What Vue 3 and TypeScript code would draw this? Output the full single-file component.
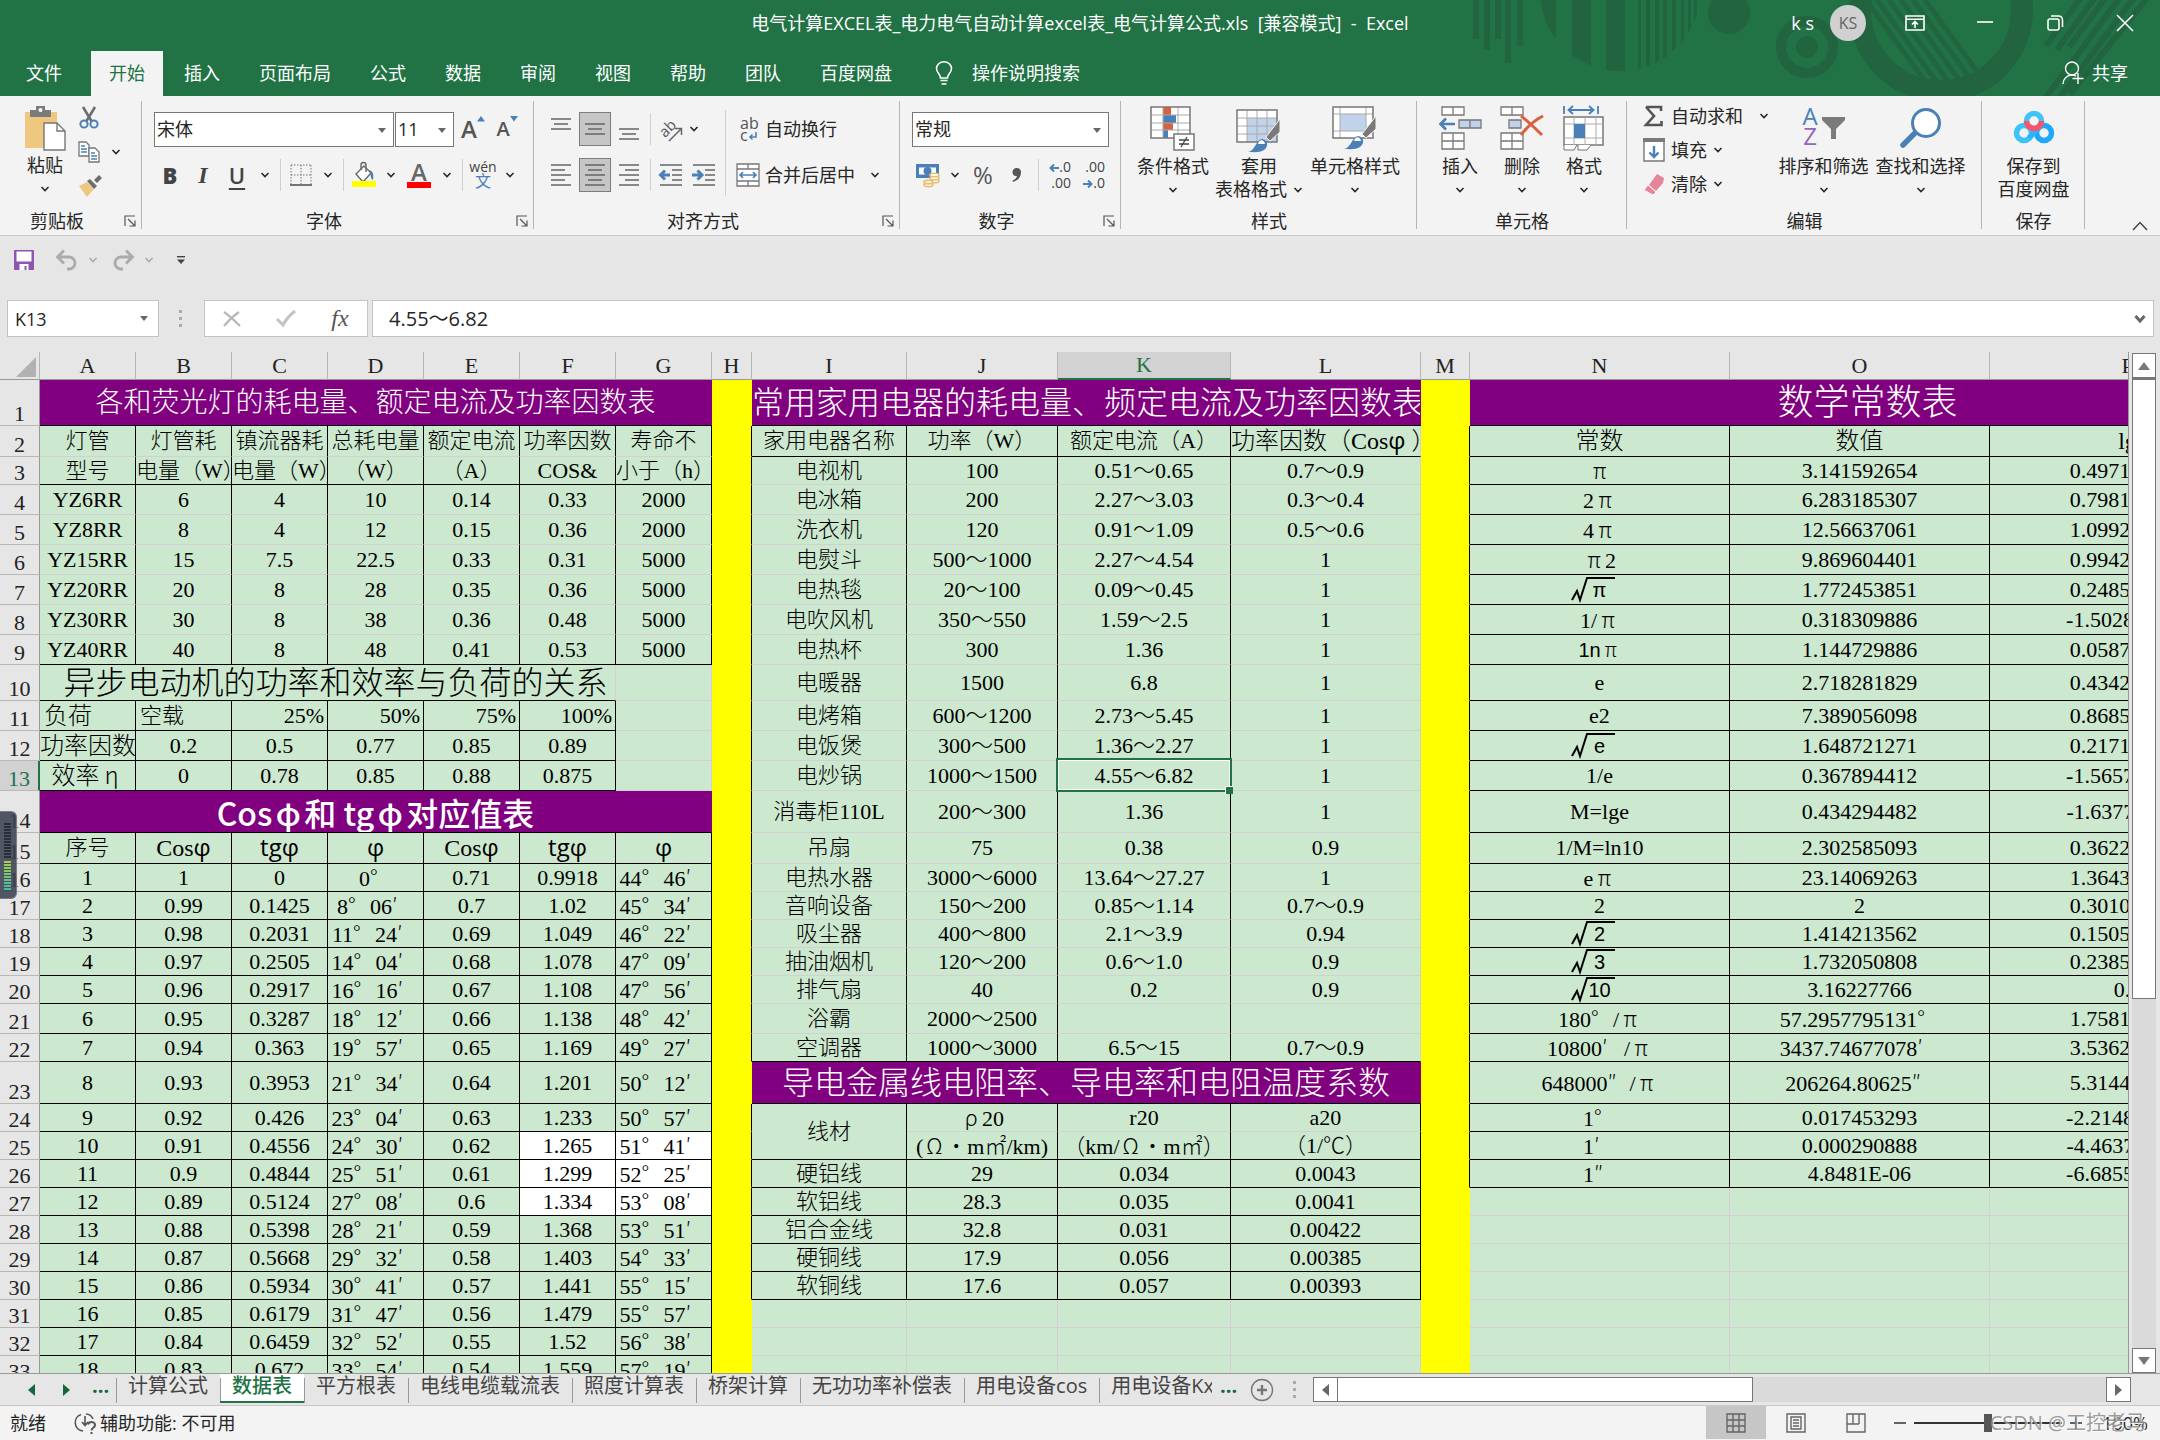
<script setup lang="ts">
import { h, ref } from 'vue'

interface Cell {
  text: string
  cls: string[]
  cols?: number
  rows?: number
  kind?: 'root' | 'phi'
}

const Chev = () =>
  h('svg', { class: 'chev-icon', width: 10, height: 6, viewBox: '0 0 10 6' }, [
    h('path', { d: 'M1.5 1l3.5 3.6L8.5 1', fill: 'none', stroke: 'currentColor', 'stroke-width': 1.5 }),
  ])
const Launcher = () =>
  h('svg', { width: 12, height: 12, viewBox: '0 0 12 12' }, [
    h('path', { d: 'M1 11V1h10M4 4l6.5 6.5M11 5.5V11H5.5', fill: 'none', stroke: '#555', 'stroke-width': 1.2 }),
  ])

const menuTabs = ['插入', '页面布局', '公式', '数据', '审阅', '视图', '帮助', '团队', '百度网盘']
const sheets = ['计算公式', '数据表', '平方根表', '电线电缆载流表', '照度计算表', '桥架计算', '无功功率补偿表', '用电设备cos', '用电设备Kx']
const activeSheet = ref('数据表')
const fontName = ref('宋体')
const fontSize = ref('11')
const numFormat = ref('常规')
const nameBox = ref('K13')
const formula = ref('4.55～6.82')
const zoomLevel = ref(50)

const columns = [
  { n: 'A', w: 96 }, { n: 'B', w: 96 }, { n: 'C', w: 96 }, { n: 'D', w: 96 }, { n: 'E', w: 96 },
  { n: 'F', w: 96 }, { n: 'G', w: 96 }, { n: 'H', w: 40 }, { n: 'I', w: 155 }, { n: 'J', w: 151 },
  { n: 'K', w: 173 }, { n: 'L', w: 190 }, { n: 'M', w: 49 }, { n: 'N', w: 260 }, { n: 'O', w: 260 },
  { n: 'P', w: 276 },
]
const tableWidth = 40 + columns.reduce((sum, c) => sum + c.w, 0)

const rowHeights = [
  46, 31, 28, 30, 30, 30, 30, 30, 30, 36, 30, 30, 30, 42, 31, 28, 28, 28, 28, 28, 30, 28, 42,
  28, 28, 28, 28, 28, 28, 28, 28, 28, 28,
]

const left: string[] = [
  '各和荧光灯的耗电量、额定电流及功率因数表',
  '灯管|灯管耗|镇流器耗|总耗电量|额定电流|功率因数|寿命不',
  '型号|电量（W）|电量（W）|（W）|（A）|COS&|小于（h）',
  'YZ6RR|6|4|10|0.14|0.33|2000',
  'YZ8RR|8|4|12|0.15|0.36|2000',
  'YZ15RR|15|7.5|22.5|0.33|0.31|5000',
  'YZ20RR|20|8|28|0.35|0.36|5000',
  'YZ30RR|30|8|38|0.36|0.48|5000',
  'YZ40RR|40|8|48|0.41|0.53|5000',
  '\u00a0\u00a0异步电动机的功率和效率与负荷的关系',
  '负荷|空载|25%|50%|75%|100%|',
  '功率因数|0.2|0.5|0.77|0.85|0.89|',
  '效率η|0|0.78|0.85|0.88|0.875|',
  'Cosφ和 tgφ对应值表',
  '序号|Cosφ|tgφ|φ|Cosφ|tgφ|φ',
  '1|1|0|0°|0.71|0.9918|44°46′',
  '2|0.99|0.1425|8°06′|0.7|1.02|45°34′',
  '3|0.98|0.2031|11°24′|0.69|1.049|46°22′',
  '4|0.97|0.2505|14°04′|0.68|1.078|47°09′',
  '5|0.96|0.2917|16°16′|0.67|1.108|47°56′',
  '6|0.95|0.3287|18°12′|0.66|1.138|48°42′',
  '7|0.94|0.363|19°57′|0.65|1.169|49°27′',
  '8|0.93|0.3953|21°34′|0.64|1.201|50°12′',
  '9|0.92|0.426|23°04′|0.63|1.233|50°57′',
  '10|0.91|0.4556|24°30′|0.62|1.265|51°41′',
  '11|0.9|0.4844|25°51′|0.61|1.299|52°25′',
  '12|0.89|0.5124|27°08′|0.6|1.334|53°08′',
  '13|0.88|0.5398|28°21′|0.59|1.368|53°51′',
  '14|0.87|0.5668|29°32′|0.58|1.403|54°33′',
  '15|0.86|0.5934|30°41′|0.57|1.441|55°15′',
  '16|0.85|0.6179|31°47′|0.56|1.479|55°57′',
  '17|0.84|0.6459|32°52′|0.55|1.52|56°38′',
  '18|0.83|0.672|33°54′|0.54|1.559|57°19′',
]

const middle: string[] = [
  '常用家用电器的耗电量、频定电流及功率因数表',
  '家用电器名称|功率（W）|额定电流（A）|功率因数（Cosφ ）',
  '电视机|100|0.51～0.65|0.7～0.9',
  '电冰箱|200|2.27～3.03|0.3～0.4',
  '洗衣机|120|0.91～1.09|0.5～0.6',
  '电熨斗|500～1000|2.27～4.54|1',
  '电热毯|20～100|0.09～0.45|1',
  '电吹风机|350～550|1.59～2.5|1',
  '电热杯|300|1.36|1',
  '电暖器|1500|6.8|1',
  '电烤箱|600～1200|2.73～5.45|1',
  '电饭煲|300～500|1.36～2.27|1',
  '电炒锅|1000～1500|4.55～6.82|1',
  '消毒柜110L|200～300|1.36|1',
  '吊扇|75|0.38|0.9',
  '电热水器|3000～6000|13.64～27.27|1',
  '音响设备|150～200|0.85～1.14|0.7～0.9',
  '吸尘器|400～800|2.1～3.9|0.94',
  '抽油烟机|120～200|0.6～1.0|0.9',
  '排气扇|40|0.2|0.9',
  '浴霸|2000～2500||',
  '空调器|1000～3000|6.5～15|0.7～0.9',
  '导电金属线电阻率、导电率和电阻温度系数',
  '线材|ρ20|r20|a20',
  '|(Ω•m㎡/km)|（km/Ω•m㎡）|（1/℃）',
  '硬铝线|29|0.034|0.0043',
  '软铝线|28.3|0.035|0.0041',
  '铝合金线|32.8|0.031|0.00422',
  '硬铜线|17.9|0.056|0.00385',
  '软铜线|17.6|0.057|0.00393',
]

const right: string[] = [
  '数学常数表',
  '常数|数值|lg',
  'π|3.141592654|0.497149873',
  '2π|6.283185307|0.798179868',
  '4π|12.56637061|1.099209864',
  'π2|9.869604401|0.994299745',
  '√π|1.772453851|0.248574936',
  '1/π|0.318309886|-1.502850127',
  '1nπ|1.144729886|0.058703021',
  'e|2.718281829|0.434294482',
  'e2|7.389056098|0.868588964',
  '√e|1.648721271|0.217147241',
  '1/e|0.367894412|-1.565705518',
  'M=lge|0.434294482|-1.637784311',
  '1/M=ln10|2.302585093|0.362215689',
  'eπ|23.14069263|1.364376354',
  '2|2|0.301029996',
  '√2|1.414213562|0.150514998',
  '√3|1.732050808|0.238560627',
  '√10|3.16227766|0.5',
  '180°/π|57.2957795131°|1.758122632',
  '10800′/π|3437.74677078′|3.536273883',
  '648000″/π|206264.80625″|5.314425133',
  '1°|0.017453293|-2.214877368',
  '1′|0.000290888|-4.463726117',
  '1″|4.8481E-06|-6.685574867',
]

function leftCells(r: number): Cell[] {
  const parts = left[r - 1].split('|')
  if (r === 1) return [{ text: parts[0], cols: 7, cls: ['title', 's28', 'kb'] }]
  if (r === 14) return [{ text: parts[0], cols: 7, cls: ['title', 's32', 'bold', 'kb'] }]
  if (r === 10) return [{ text: parts[0], cols: 6, cls: ['s32', 'kb'] }, { text: '', cls: [] }]
  return parts.map((text, c) => {
    const cls: string[] = []
    const inner = r >= 11 && r <= 13
    if (!inner || c < 6) cls.push('kr')
    if (r === 3 || r === 9 || r >= 15 || (inner && c < 6)) cls.push('kb')
    if (r === 11) cls.push(c < 2 ? 'al' : 'ar')
    if (c === 0 && inner) cls.push('s24')
    if (r === 15 && c > 0) cls.push('s24')
    if (r >= 25 && r <= 27 && c > 4) cls.push('white')
    return { text, cls, kind: r === 15 && c > 0 ? 'phi' : undefined }
  })
}

function middleCells(r: number): Cell[] {
  if (r > middle.length) return ['', '', '', ''].map((text) => ({ text, cls: [] }))
  const parts = middle[r - 1].split('|')
  if (parts.length === 1) return [{ text: parts[0], cols: 4, cls: ['title', 's32', 'kb'] }]
  const cells: Cell[] = parts.map((text, c) => {
    const cls: string[] = []
    if (c < 3 || r >= 24) cls.push('kr')
    if (r === 2 || r === 22 || r >= 25) cls.push('kb')
    if (r === 2 && c === 3) cls.push('s24')
    if (r === 13 && c === 2) cls.push('selected')
    return { text, cls, kind: r === 2 && c === 3 ? 'phi' : undefined }
  })
  if (r === 24) {
    cells[0].rows = 2
    cells[0].cls.push('kb')
  }
  return r === 25 ? cells.slice(1) : cells
}

function rightCells(r: number): Cell[] {
  if (r > right.length) return ['', '', ''].map((text) => ({ text, cls: [] }))
  const parts = right[r - 1].split('|')
  if (parts.length === 1) return [{ text: parts[0], cols: 3, cls: ['title', 's36', 'kb'] }]
  return parts.map((text, c) => {
    const cls = ['kr', 'kb']
    if (r === 2) cls.push('s24')
    if (r === 9 && c === 0) cls.push('sans')
    return text.startsWith('√') ? { text: text.slice(1), cls, kind: 'root' as const } : { text, cls }
  })
}

const rows = rowHeights.map((height, i) => {
  const r = i + 1
  const gapH: Cell = { text: '', cls: ['yellow', (r > 1 && r < 23) || (r > 23 && r < 31) ? 'kr' : ''] }
  const gapM: Cell = { text: '', cls: ['yellow', r > 1 && r < 27 ? 'kr' : ''] }
  return { r, height, cells: [...leftCells(r), gapH, ...middleCells(r), gapM, ...rightCells(r)] }
})

// Degree marks and Greek letters take a full character cell, as in a CJK font.
const runs = (text: string) => text.split(/([°′″πρηφΩ•])/).filter(Boolean)
const runClass = (s: string) => (/^[°′″]$/.test(s) ? 'cjk mark' : 'cjk')
const isWide = (s: string) => /^[°′″πρηφΩ•]$/.test(s)
</script>

<template>
  <div class="app">
    <header class="top">
      <svg class="decor" width="700" height="96" viewBox="1460 0 700 96" aria-hidden="true">
        <defs>
          <clipPath id="disc"><circle cx="1620" cy="-9" r="80" /></clipPath>
          <clipPath id="hole"><circle cx="1940" cy="14" r="71" /></clipPath>
        </defs>
        <g fill="#22643f">
          <path d="M1473 0h6v39h-6zM1484 0h6v50h-6zM1495 0h6v39h-6zM1505 0h6v63h-6zM1517 0h6v46h-6z" />
          <g clip-path="url(#disc)">
            <path d="M1540 0h16v80h-16zM1572 0h19v80h-19zM1606 0h19v80h-19zM1638 0h3v80h-3zM1646 0h4v80h-4zM1655 0h4v80h-4zM1663 0h4v80h-4zM1672 0h4v80h-4zM1681 0h3v80h-3zM1688 0h3v80h-3zM1694 0h3v80h-3z" />
          </g>
          <circle cx="1729" cy="13" r="21" />
          <circle cx="1807" cy="47" r="11" />
        </g>
        <circle cx="1807" cy="47" r="26" fill="none" stroke="#22643f" stroke-width="10" />
        <circle cx="1941" cy="10" r="81" fill="none" stroke="#22643f" stroke-width="22" />
        <g stroke="#22643f" stroke-width="5" clip-path="url(#hole)">
          <path d="M1866 0l80 110M1877 0l80 110M1889 0l80 110M1901 0l80 110M1913 0l80 110M1925 0l80 110" />
        </g>
        <g stroke="#22643f" stroke-width="6">
          <path d="M2046 46L2082 -4M2057 50L2096 -4M2069 47L2110 -8M2044 100L2124 -8M2058 100L2138 -8M2070 94L2152 -8" />
        </g>
      </svg>
      <div class="titlebar">
        <h1 class="doc-title">电气计算EXCEL表_电力电气自动计算excel表_电气计算公式.xls&nbsp; [兼容模式]&nbsp; -&nbsp; Excel</h1>
        <div class="account">
          <span>k&nbsp;s</span><button class="avatar">KS</button>
        </div>
        <div class="win-buttons">
          <button aria-label="功能区显示选项">
            <svg width="20" height="16" viewBox="0 0 20 16" fill="none" stroke="#fff" stroke-width="1.6"><path d="M1 1h18v14H1zM1 4.2h18M10 13V7M7 9.5L10 6.5l3 3" /></svg>
          </button>
          <button aria-label="最小化">
            <svg width="16" height="16" viewBox="0 0 16 16"><path d="M0 7h16" stroke="#fff" stroke-width="1.6" /></svg>
          </button>
          <button aria-label="还原">
            <svg width="16" height="16" viewBox="0 0 16 16" fill="none" stroke="#fff" stroke-width="1.6"><rect x="1" y="4" width="11" height="11" rx="2" /><path d="M4 1h7.500a4 4 0 0 1 4 4v7" /></svg>
          </button>
          <button aria-label="关闭">
            <svg width="16" height="16" viewBox="0 0 16 16"><path d="M0 0l16 16M16 0L0 16" stroke="#fff" stroke-width="1.6" /></svg>
          </button>
        </div>
      </div>
      <nav class="tabs">
        <button class="tab file">文件</button>
        <button class="tab active">开始</button>
        <button v-for="t in menuTabs" :key="t" class="tab">{{ t }}</button>
        <button class="tell-me">
          <svg width="18" height="24" viewBox="0 0 18 24" fill="none" stroke="#fff" stroke-width="1.6"><path d="M5.500 17c0-4-4-5-4-9.500a7.500 6.700 0 0 1 15 0c0 4.500-4 5.500-4 9.500zM5.500 19.500h7M6.500 23h5" /></svg>
          操作说明搜索
        </button>
        <button class="share">
          <svg width="22" height="24" viewBox="0 0 22 24" fill="none" stroke="#fff" stroke-width="1.4"><circle cx="10" cy="7.500" r="6.500" /><path d="M1 23c0-5 4-9 9-9 2 0 3 .5 4 1M16 12v11M10.500 17.500h11" /></svg>
          共享
        </button>
      </nav>
    </header>

    <section class="ribbon">
      <div class="group g-clip">
        <div class="body">
          <button class="big paste">
            <svg width="42" height="45" viewBox="0 0 42 45"><path d="M1 6h32v36H1z" fill="#eec780" /><path d="M6 4h6V0h9v4h6v7H6z" fill="#7b7b7b" /><circle cx="16.500" cy="4" r="2" fill="#fff" /><path d="M20 17h13l8 8v19H20z" fill="#fff" stroke="#777" stroke-width="1.400" /><path d="M33 17v8h8" fill="none" stroke="#777" stroke-width="1.400" /></svg>
            <span>粘贴</span><span class="second"><Chev /></span>
          </button>
          <div class="clip-col">
            <button aria-label="剪切">
              <svg width="22" height="22" viewBox="0 0 22 22"><path d="M5 0l8.500 14M17 0L8.500 14" stroke="#6d6d6d" stroke-width="2.600" /><circle cx="6" cy="17" r="3.600" fill="none" stroke="#4a80b8" stroke-width="2" /><circle cx="16" cy="17" r="3.600" fill="none" stroke="#4a80b8" stroke-width="2" /></svg>
            </button>
            <button aria-label="复制">
              <svg width="22" height="22" viewBox="0 0 22 22" fill="#fff" stroke="#777" stroke-width="1.300"><path d="M1 1h7l3 3v11H1z" /><path d="M11 7h6l4 4v10H11z" /><path d="M3 5h4M3 8h6M3 11h6M13 12h4M13 15h6M13 18h6" stroke="#4a80b8" /></svg>
              <Chev />
            </button>
            <button aria-label="格式刷">
              <svg width="24" height="22" viewBox="0 0 24 22"><path d="M1 11l8-4 7 7-7 8z" fill="#eec780" /><path d="M9 6l3-2 7 7-3 3zM16 5l5-5 3 3-5 5z" fill="#6d6d6d" /></svg>
            </button>
          </div>
        </div>
        <footer><span>剪贴板</span><button aria-label="剪贴板设置"><Launcher /></button></footer>
      </div>

      <div class="group g-font">
        <div class="body rows">
          <div class="row">
            <label class="combo font-name"><select v-model="fontName" aria-label="字体"><option>宋体</option></select></label>
            <label class="combo font-size"><select v-model="fontSize" aria-label="字号"><option>11</option></select></label>
            <button class="ib w" aria-label="增大字号"><span class="grow">A</span><svg width="8" height="6" viewBox="0 0 8 6"><path d="M0 5.500L4 0l4 5.500z" fill="#4a80b8" /></svg></button>
            <button class="ib w" aria-label="减小字号"><span class="shrink">A</span><svg width="8" height="6" viewBox="0 0 8 6"><path d="M0 0h8L4 5.500z" fill="#4a80b8" /></svg></button>
          </div>
          <div class="row">
            <button class="ib letter"><b>B</b></button>
            <button class="ib w letter italic">I</button>
            <button class="ib w letter underline">U</button>
            <button class="chev" aria-label="下划线选项"><Chev /></button>
            <i class="sep"></i>
            <button class="ib" aria-label="边框">
              <svg width="22" height="22" viewBox="0 0 22 22" fill="none" stroke="#777"><path d="M1 1h20M1 11h20M1 1v19M11 1v19M21 1v19" stroke-dasharray="1.500 1.500" /><path d="M0 21h22" stroke-width="1.600" stroke="#555" /></svg>
            </button>
            <button class="chev" aria-label="边框选项"><Chev /></button>
            <i class="sep"></i>
            <button class="ib" aria-label="填充颜色">
              <svg width="24" height="26" viewBox="0 0 24 26"><path d="M4 12l8-8 7 7-8 9z" fill="#fff" stroke="#666" stroke-width="1.400" /><path d="M9 8V3a2.500 2.500 0 0 1 5 0v7" fill="none" stroke="#666" stroke-width="1.400" /><path d="M17 8c4 1 5 4 4 10-2-1-3-4-2-7z" fill="#4a80b8" /><path d="M0 19h24v6H0z" fill="#ff0" /></svg>
            </button>
            <button class="chev" aria-label="填充选项"><Chev /></button>
            <button class="ib w fc"><span>A</span><i></i></button>
            <button class="chev" aria-label="字体颜色选项"><Chev /></button>
            <i class="sep"></i>
            <button class="ib wen"><span>wén</span><span class="blue">文</span></button>
            <button class="chev" aria-label="拼音选项"><Chev /></button>
          </div>
        </div>
        <footer><span>字体</span><button aria-label="字体设置"><Launcher /></button></footer>
      </div>

      <div class="group g-align">
        <div class="body">
          <div class="rows">
            <div class="row">
              <button class="ib w" aria-label="顶端对齐"><svg width="20" height="22" viewBox="0 0 20 22" stroke="#666" stroke-width="1.500"><path d="M0 1h20M3 6h14M0 11h20" /></svg></button>
              <button class="ib on" aria-label="垂直居中"><svg width="20" height="22" viewBox="0 0 20 22" stroke="#666" stroke-width="1.500"><path d="M0 6h20M3 11h14M0 16h20" /></svg></button>
              <button class="ib w" aria-label="底端对齐"><svg width="20" height="22" viewBox="0 0 20 22" stroke="#666" stroke-width="1.500"><path d="M0 11h20M3 16h14M0 21h20" /></svg></button>
              <i class="sep"></i>
              <button class="ib" aria-label="方向"><svg width="24" height="24" viewBox="0 0 24 24"><text x="0" y="17" transform="rotate(-45 8 12)" font-size="15" font-family="Open Sans" fill="#555">ab</text><path d="M10 24L22 12M16 11.500h6.500V18" fill="none" stroke="#666" stroke-width="1.500" /></svg></button>
              <button class="chev narrow" aria-label="方向选项"><Chev /></button>
            </div>
            <div class="row">
              <button class="ib w" aria-label="左对齐"><svg width="20" height="22" viewBox="0 0 20 22" stroke="#666" stroke-width="1.500"><path d="M0 1h20M0 6h14M0 11h20M0 16h14M0 21h20" /></svg></button>
              <button class="ib on" aria-label="居中"><svg width="20" height="22" viewBox="0 0 20 22" stroke="#666" stroke-width="1.500"><path d="M0 1h20M3 6h14M0 11h20M3 16h14M0 21h20" /></svg></button>
              <button class="ib w" aria-label="右对齐"><svg width="20" height="22" viewBox="0 0 20 22" stroke="#666" stroke-width="1.500"><path d="M0 1h20M6 6h14M0 11h20M6 16h14M0 21h20" /></svg></button>
              <i class="sep"></i>
              <button class="ib" aria-label="减少缩进"><svg width="24" height="22" viewBox="0 0 24 22"><path d="M1 1h22M13 6h10M13 11h10M13 16h10M1 21h22" stroke="#666" stroke-width="1.500" /><path d="M11 11H2M6 6.500L1.500 11 6 15.500" fill="none" stroke="#4a80b8" stroke-width="3" /></svg></button>
              <button class="ib w" aria-label="增加缩进"><svg width="24" height="22" viewBox="0 0 24 22"><path d="M1 1h22M13 6h10M13 11h10M13 16h10M1 21h22" stroke="#666" stroke-width="1.500" /><path d="M0 11h9M5.500 6.500L10 11l-4.500 4.500" fill="none" stroke="#4a80b8" stroke-width="3" /></svg></button>
            </div>
          </div>
          <i class="sep tall"></i>
          <div class="rows">
            <div class="row">
              <button class="text-btn"><span class="wrap-icon"><span>ab</span><span>c<svg width="9" height="9" viewBox="0 0 9 9"><path d="M8 0v5H2M4.500 2.500L2 5l2.500 2.500" fill="none" stroke="#4a80b8" stroke-width="1.600" /></svg></span></span>自动换行</button>
            </div>
            <div class="row">
              <button class="text-btn"><svg width="24" height="24" viewBox="0 0 24 24"><path d="M1 1h22v22H1zM1 6h22M1 18h22M12 1v5M12 18v5" fill="#fff" stroke="#777" stroke-width="1.300" /><path d="M4 12h16M7 9l-3 3 3 3M17 9l3 3-3 3" fill="none" stroke="#4a80b8" stroke-width="1.700" /></svg>合并后居中</button>
              <button class="chev wide" aria-label="合并选项"><Chev /></button>
            </div>
          </div>
        </div>
        <footer><span>对齐方式</span><button aria-label="对齐设置"><Launcher /></button></footer>
      </div>

      <div class="group g-num">
        <div class="body rows">
          <div class="row">
            <label class="combo num"><select v-model="numFormat" aria-label="数字格式"><option>常规</option></select></label>
          </div>
          <div class="row">
            <button class="ib" aria-label="会计数字格式"><svg width="24" height="24" viewBox="0 0 24 24"><path d="M0 1h23v14H0z" fill="#4a80b8" /><path d="M3 4.500h17v7H3z" fill="#fff" /><circle cx="11.500" cy="8" r="4" fill="#4a80b8" /><g fill="#fff" stroke="#e8bd74" stroke-width="1.600"><ellipse cx="18.500" cy="18" rx="4.500" ry="1.800" /><ellipse cx="18.500" cy="15" rx="4.500" ry="1.800" /><ellipse cx="18.500" cy="12" rx="4.500" ry="1.800" /><ellipse cx="12.500" cy="22" rx="4.500" ry="1.600" /><ellipse cx="12.500" cy="19" rx="4.500" ry="1.600" /></g></svg></button>
            <button class="chev" aria-label="货币选项"><Chev /></button>
            <button class="ib w pct">%</button>
            <button class="ib w" aria-label="千位分隔"><svg width="12" height="18" viewBox="0 0 12 18"><path d="M5.500 2a4 4 0 0 1 4.500 4.200C10 11 7 14.500 2 16l-.5-1.500C4 13.500 5.500 12 6 10 3 10.500 1.500 8.500 1.500 6.200A4 4 0 0 1 5.500 2z" fill="#555" /></svg></button>
            <i class="sep"></i>
            <button class="ib dec"><span><svg width="10" height="8" viewBox="0 0 10 8"><path d="M10 4H2M5 .5L1.500 4 5 7.500" fill="none" stroke="#4a80b8" stroke-width="2" /></svg>.0</span><span>.00</span></button>
            <button class="ib w dec"><span>.00</span><span><svg width="10" height="8" viewBox="0 0 10 8"><path d="M0 4h8M5 .5L8.500 4 5 7.500" fill="none" stroke="#4a80b8" stroke-width="2" /></svg>.0</span></button>
          </div>
        </div>
        <footer><span>数字</span><button aria-label="数字设置"><Launcher /></button></footer>
      </div>

      <div class="group g-style">
        <div class="body">
          <button class="big b80">
            <svg width="46" height="46" viewBox="0 0 46 46"><path d="M1 1h39v31H1z" fill="#fff" /><path d="M13 1h8v8h-8zM13 17h10v7H13z" fill="#d9603f" /><path d="M13 9h13v8H13zM13 24h5v8h-5z" fill="#4a80b8" /><path d="M1 9h39M1 17h39M1 24h39M13 1v31M28 1v31" stroke="#aaa" /><path d="M1 1h39v31H1z" fill="none" stroke="#777" stroke-width="1.500" /><path d="M24 28h20v16H24z" fill="#fff" stroke="#777" stroke-width="1.500" /><path d="M29 34h10M29 38h10M37 31l-6 10" stroke="#444" stroke-width="1.300" /></svg>
            <span>条件格式</span><span class="second"><Chev /></span>
          </button>
          <button class="big b92">
            <svg width="46" height="46" viewBox="0 0 46 46"><path d="M1 4h40v32H1z" fill="#fff" /><path d="M11 12h30v24H11z" fill="#c0d3ea" /><path d="M1 12h40M1 20h40M1 28h40M11 4v32M21 4v32M31 4v32" stroke="#aaa" /><path d="M1 4h40v32H1z" fill="none" stroke="#777" stroke-width="1.500" /><path d="M44 13v13l-10 9-4-4z" fill="#7a7a7a" stroke="#f3f3f3" /><path d="M12 46c7-1 8-12 14-13 6 1 7 7 2 11-4 3-11 2-16 2z" fill="#4a80b8" /><path d="M22 38c1-5 6-5 7 0" fill="#fff" /></svg>
            <span>套用</span><span class="second">表格格式 <Chev /></span>
          </button>
          <button class="big b92 gap">
            <svg width="46" height="46" viewBox="0 0 46 46"><path d="M1 1h40v31H1z" fill="#fff" /><path d="M8 8h26v17H8z" fill="#c0d3ea" /><path d="M1 8h40M1 25h40M8 1v31M34 1v31" stroke="#aaa" /><path d="M1 1h40v31H1z" fill="none" stroke="#777" stroke-width="1.500" /><path d="M44 10v13l-10 9-4-4z" fill="#7a7a7a" stroke="#f3f3f3" /><path d="M12 43c7-1 8-12 14-13 6 1 7 7 2 11-4 3-11 2-16 2z" fill="#4a80b8" /><path d="M22 35c1-5 6-5 7 0" fill="#fff" /></svg>
            <span>单元格样式</span><span class="second"><Chev /></span>
          </button>
        </div>
        <footer><span>样式</span></footer>
      </div>

      <div class="group g-cells">
        <div class="body">
          <button class="big b62">
            <svg width="44" height="46" viewBox="0 0 44 46"><path d="M4 1h22v8H4zM15 1v8M4 27h22v16H4zM15 27v16M4 35h22" fill="#fff" stroke="#777" stroke-width="1.300" /><path d="M21 14h22v8H21zM32 14v8" fill="#c0d3ea" stroke="#777" stroke-width="1.300" /><path d="M17 18H3M8 12.500L2.500 18 8 23.500" fill="none" stroke="#4a80b8" stroke-width="2.600" /></svg>
            <span>插入</span><span class="second"><Chev /></span>
          </button>
          <button class="big b62">
            <svg width="44" height="46" viewBox="0 0 44 46"><path d="M1 1h22v8H1zM12 1v8M1 27h22v16H1zM12 27v16M1 35h22" fill="#fff" stroke="#777" stroke-width="1.300" /><path d="M9 14h12v8H9z" fill="#c0d3ea" stroke="#777" stroke-width="1.300" /><path d="M21 10c7 5 14 12 21 19M43 10c-8 4-16 11-22 19" fill="none" stroke="#d9603f" stroke-width="3" /></svg>
            <span>删除</span><span class="second"><Chev /></span>
          </button>
          <button class="big b62">
            <svg width="42" height="46" viewBox="0 0 42 46"><path d="M1 0v8M35 0v8M6 4h24M10 0L5.500 4l4.500 4M26 0l4.500 4L26 8" fill="none" stroke="#4a80b8" stroke-width="1.800" /><path d="M1 11h39v28H1z" fill="#fff" stroke="#777" stroke-width="1.500" /><path d="M1 18h39M1 32h39M11 11v28M22 11v28M33 11v28" stroke="#aaa" /><path d="M11 18h11v14H11z" fill="#4a80b8" /><path d="M1 39v5h10l3-5M15 39v5h9l4-5" fill="#fff" stroke="#777" /></svg>
            <span>格式</span><span class="second"><Chev /></span>
          </button>
        </div>
        <footer><span>单元格</span></footer>
      </div>

      <div class="group g-edit">
        <div class="body">
          <div class="edit-col">
            <button><svg width="22" height="24" viewBox="0 0 22 24"><path d="M3 3h15v4M3 3l8 9-8 9h15.500v-4" fill="none" stroke="#555" stroke-width="2.600" /></svg>自动求和<Chev class="far" /></button>
            <button><svg width="22" height="24" viewBox="0 0 22 24"><path d="M1 1h20v22H1z" fill="#fff" stroke="#777" stroke-width="1.400" /><path d="M0 0h22v4H0z" fill="#7a7a7a" /><path d="M11 8v11M6.500 14.500L11 19l4.500-4.500" fill="none" stroke="#4a80b8" stroke-width="2.400" /></svg>填充<Chev /></button>
            <button><svg width="22" height="24" viewBox="0 0 22 24"><path d="M14 2l7 4-1 5-7 8-7-6z" fill="#e7849a" /><path d="M5 13l8 7-3 3-9-5z" fill="#e7849a" stroke="#f3f3f3" stroke-width="1" /></svg>清除<Chev /></button>
          </div>
          <button class="big b97">
            <span class="sort-icon"><span class="az"><span>A</span><span class="z">Z</span></span><svg width="23" height="23" viewBox="0 0 23 23"><path d="M0 0h23v3l-9 9v10H9V12L0 3z" fill="#7a7a7a" /></svg></span>
            <span>排序和筛选</span><span class="second"><Chev /></span>
          </button>
          <button class="big b97">
            <svg width="44" height="46" viewBox="0 0 44 46"><path d="M4 39l14-14" stroke="#4a80b8" stroke-width="5.500" stroke-linecap="round" /><circle cx="27" cy="17" r="13.500" fill="#fff" stroke="#4a80b8" stroke-width="3" /></svg>
            <span>查找和选择</span><span class="second"><Chev /></span>
          </button>
        </div>
        <footer><span>编辑</span></footer>
      </div>

      <div class="group g-save">
        <div class="body">
          <button class="big b97">
            <svg width="42" height="46" viewBox="0 0 42 46" fill="none" stroke-width="5.500"><circle cx="11" cy="27" r="7.500" stroke="#3cc3f7" /><circle cx="31" cy="27" r="7.500" stroke="#1ea7fb" /><path d="M16 32l9-10" stroke="#2bb5fa" /><circle cx="21" cy="15" r="7.500" stroke="#3fc4f8" /><path d="M13.500 15a7.500 7.500 0 0 0 15 0" stroke="#f9536d" /></svg>
            <span>保存到</span><span class="second">百度网盘</span>
          </button>
        </div>
        <footer><span>保存</span></footer>
      </div>
      <button class="collapse" aria-label="折叠功能区"><svg width="16" height="10" viewBox="0 0 16 10"><path d="M1 9l7-7.500L15 9" fill="none" stroke="#444" stroke-width="1.500" /></svg></button>
    </section>

    <div class="qat">
      <button aria-label="保存"><svg width="20" height="20" viewBox="0 0 20 20"><path d="M0 0h20v20H0z" fill="#8a55b3" /><path d="M2.500 1.500h15v10h-15zM5.500 14h9v6h-2v-4h-2v4h-5z" fill="#fff" /></svg></button>
      <button aria-label="撤消"><svg width="24" height="20" viewBox="0 0 24 20"><path d="M2 7h12a6 6 0 0 1 0 12h-2M9 .5L2.500 7 9 13.500" fill="none" stroke="#ababab" stroke-width="2.800" /></svg></button>
      <button class="dim" aria-label="撤消选项"><Chev /></button>
      <button aria-label="恢复"><svg width="24" height="20" viewBox="0 0 24 20"><path d="M22 7H10a6 6 0 0 0 0 12h2M15 .5L21.500 7 15 13.500" fill="none" stroke="#ababab" stroke-width="2.800" /></svg></button>
      <button class="dim" aria-label="恢复选项"><Chev /></button>
      <button class="custom" aria-label="自定义"><svg width="8" height="8" viewBox="0 0 8 8"><path d="M0 .7h8" stroke="#444" stroke-width="1.400" /><path d="M0 3.500h8L4 8z" fill="#444" /></svg></button>
    </div>

    <div class="formula-bar">
      <label class="combo name-box"><input v-model="nameBox" aria-label="名称框" /></label>
      <i class="dots"></i>
      <div class="fx">
        <button aria-label="取消"><svg width="18" height="16" viewBox="0 0 18 16"><path d="M1 1c6 4 11 9 16 14M16 1C10 5 5 10 1 15" fill="none" stroke="#b9b9b9" stroke-width="2.200" /></svg></button>
        <button aria-label="输入"><svg width="20" height="17" viewBox="0 0 20 17"><path d="M1 9l6 6C10 9 14 5 19 1" fill="none" stroke="#c3c3c3" stroke-width="3" /></svg></button>
        <button class="fn"><em>fx</em></button>
      </div>
      <label class="formula"><input v-model="formula" aria-label="编辑栏" />
        <svg width="12" height="8" viewBox="0 0 12 8"><path d="M1.500 1L6 6l4.500-5" fill="none" stroke="#666" stroke-width="3" /></svg>
      </label>
    </div>

    <main class="sheet">
      <div class="viewport">
        <table :style="{ width: tableWidth + 'px' }">
          <colgroup><col :style="{ width: '40px' }" /><col v-for="c in columns" :key="c.n" :style="{ width: c.w + 'px' }" /></colgroup>
          <thead>
            <tr>
              <th class="corner"><svg width="20" height="20" viewBox="0 0 20 20"><path d="M20 0v20H0z" fill="#b2b2b2" /></svg></th>
              <th v-for="c in columns" :key="c.n" scope="col" :class="{ cur: c.n === 'K' }">{{ c.n }}</th>
            </tr>
          </thead>
          <tbody>
            <tr v-for="row in rows" :key="row.r" :style="{ height: row.height + 'px' }">
              <th scope="row" :class="{ cur: row.r === 13 }">{{ row.r }}</th>
              <td v-for="(cell, i) in row.cells" :key="i" :class="cell.cls" :colspan="cell.cols" :rowspan="cell.rows">
                <span v-if="cell.kind === 'root'" class="root"><svg width="44" height="26" viewBox="0 0 44 26"><path d="M1 24l5-9 3 9L16 2h28" fill="none" stroke="#000" stroke-width="2" /></svg>{{ cell.text }}</span>
                <template v-else-if="cell.kind === 'phi'"><template v-for="(s, k) in cell.text.split(/(tgφ|φ)/)" :key="k"><span v-if="s.endsWith('φ')" class="phi">{{ s }}</span><template v-else>{{ s }}</template></template></template>
                <template v-else><template v-for="(s, k) in runs(cell.text)" :key="k"><span v-if="isWide(s)" :class="runClass(s)">{{ s }}</span><template v-else>{{ s }}</template></template></template>
              </td>
            </tr>
          </tbody>
        </table>
      </div>
      <div class="vscroll">
        <button aria-label="向上"><svg width="12" height="8" viewBox="0 0 12 8"><path d="M0 8l6-8 6 8z" fill="#777" /></svg></button>
        <div class="track"><div class="thumb"></div></div>
        <button aria-label="向下"><svg width="12" height="8" viewBox="0 0 12 8"><path d="M0 0h12L6 8z" fill="#777" /></svg></button>
      </div>
      <div class="meter" aria-hidden="true"><i></i><i class="lit"></i></div>
    </main>

    <div class="sheet-tabs">
      <button class="nav" aria-label="上一张"><svg width="7" height="12" viewBox="0 0 7 12"><path d="M7 0v12L0 6z" fill="#14673c" /></svg></button>
      <button class="nav" aria-label="下一张"><svg width="7" height="12" viewBox="0 0 7 12"><path d="M0 0v12l7-6z" fill="#14673c" /></svg></button>
      <button class="more">...</button>
      <div class="tab-list">
        <button v-for="s in sheets" :key="s" :class="{ active: s === activeSheet }" @click="activeSheet = s">{{ s }}</button>
      </div>
      <button class="more">...</button>
      <button class="add" aria-label="新工作表"><svg width="24" height="24" viewBox="0 0 24 24" fill="none" stroke="#777" stroke-width="1.400"><circle cx="12" cy="12" r="10.500" /><path d="M12 7v10M7 12h10" stroke-width="2.400" /></svg></button>
      <i class="dots"></i>
      <div class="hscroll">
        <button aria-label="向左"><svg width="7" height="12" viewBox="0 0 7 12"><path d="M7 0v12L0 6z" fill="#666" /></svg></button>
        <div class="track"><div class="thumb"></div></div>
        <button aria-label="向右"><svg width="7" height="12" viewBox="0 0 7 12"><path d="M0 0v12l7-6z" fill="#666" /></svg></button>
      </div>
    </div>

    <footer class="status">
      <span class="ready">就绪</span>
      <svg width="22" height="22" viewBox="0 0 22 22" fill="none" stroke="#555" stroke-width="1.600"><path d="M6 2.500a8.500 8.500 0 0 0 2 16.500M11 2a8 8 0 0 1 7 5" /><path d="M10 4v9M7 10l3 3.500 3-3.500" /><path d="M13 12.500c1-3.500 7-3 7 .5 0 3-3.500 2.500-3.500 5.500M16.500 20v2" stroke-width="2" /></svg>
      <span>辅助功能: 不可用</span>
      <div class="views">
        <button class="on" aria-label="普通"><svg width="20" height="20" viewBox="0 0 20 20" fill="none" stroke="#666" stroke-width="1.400"><path d="M1 1h18v18H1zM1 7h18M1 13h18M7 1v18M13 1v18" /></svg></button>
        <button aria-label="页面布局"><svg width="20" height="20" viewBox="0 0 20 20" fill="none" stroke="#666" stroke-width="1.400"><path d="M1 1h18v18H1zM5 4h10v12H5zM7 7h6M7 10h6M7 13h6" /></svg></button>
        <button aria-label="分页预览"><svg width="20" height="20" viewBox="0 0 20 20" fill="none" stroke="#666" stroke-width="1.400"><path d="M1 1h18v18H1zM7 1v10M13 1v10M1 11h12" /></svg></button>
      </div>
      <button class="zoom-step" aria-label="缩小"><svg width="12" height="12" viewBox="0 0 12 12"><path d="M0 6h12" stroke="#333" stroke-width="1.500" /></svg></button>
      <input v-model="zoomLevel" class="zoom" type="range" min="0" max="100" aria-label="显示比例" />
      <button class="zoom-step" aria-label="放大"><svg width="12" height="12" viewBox="0 0 12 12"><path d="M0 6h12M6 0v12" stroke="#333" stroke-width="1.500" /></svg></button>
      <span class="percent">100%</span>
      <span class="watermark">CSDN @工控老马</span>
    </footer>
  </div>
</template>

<style>
body { margin: 0; overflow: hidden; }
</style>

<style scoped>
.app {
  height: 100vh;
  display: flex;
  flex-direction: column;
  background: #e6e6e6;
  color: #262626;
  font: 18px/24px "Open Sans", "Noto Sans CJK SC", sans-serif;
}
* { box-sizing: border-box; }
button {
  padding: 0;
  border: 0;
  background: none;
  color: inherit;
  font: inherit;
  white-space: nowrap;
}
svg { flex: none; overflow: visible; }
select, input { font: inherit; color: inherit; }

.top { position: relative; flex: none; height: 96px; background: #217346; color: #fff; }
.decor { position: absolute; right: 0; top: 0; overflow: hidden; }
.titlebar { position: relative; display: flex; align-items: center; height: 46px; }
.doc-title { position: absolute; left: 0; right: 0; margin: 0; text-align: center; font-size: 18px; line-height: 24px; font-weight: 400; }
.account { display: flex; align-items: center; gap: 16px; margin-left: auto; }
.avatar { width: 36px; height: 36px; border-radius: 50%; background: #d0d0d0; color: #666; font-size: 16px; }
.win-buttons { display: flex; margin-left: 14px; }
.win-buttons button { display: flex; align-items: center; justify-content: center; width: 70px; height: 46px; }
.tabs { position: relative; display: flex; height: 45px; margin-top: 5px; padding-left: 8px; gap: 3px; }
.tab { padding: 0 18px 2px; }
.tab.file { margin-right: 8px; }
.tab.active { background: #f3f3f3; color: #217346; }
.tell-me { display: flex; align-items: center; gap: 19px; margin-left: 22px; padding-bottom: 2px; }
.share { display: flex; align-items: center; gap: 8px; margin-left: auto; margin-right: 32px; padding-bottom: 2px; }

.ribbon { position: relative; display: flex; flex: none; height: 140px; background: #f3f3f3; border-bottom: 1px solid #c8c8c8; }
.group { position: relative; display: flex; flex-direction: column; flex: none; }
.group::after { content: ""; position: absolute; right: 0; top: 5px; bottom: 6px; width: 1px; background: #b5b5b5; }
.g-clip { width: 142px; }
.g-font { width: 392px; }
.g-align { width: 366px; }
.g-num { width: 221px; }
.g-style { width: 296px; }
.g-cells { width: 210px; }
.g-edit { width: 355px; }
.g-save { width: 103px; }
.body { display: flex; height: 112px; }
.group footer { display: flex; align-items: center; height: 26px; }
.group footer span { flex: 1; text-align: center; }
.group footer button { display: flex; width: 28px; padding-left: 10px; }
.g-clip .body { padding-left: 20px; }
.g-font .body, .g-num .body, .g-cells .body { padding-left: 12px; }
.g-align .body { padding-left: 10px; }
.g-style .body { padding-left: 12px; }
.g-edit .body { padding-left: 16px; }
.g-save .body { padding-left: 3px; }
.rows { display: flex; flex-direction: column; gap: 10px; padding-top: 15px; }
.row { display: flex; align-items: center; height: 36px; }
.ib { display: flex; align-items: center; justify-content: center; flex: none; width: 32px; height: 34px; }
.ib.w { width: 34px; }
.ib.on { background: #c6c6c6; border: 1px solid #7d7d7d; margin: 0 1px; }
.chev { display: flex; align-items: center; justify-content: center; width: 22px; height: 34px; }
.chev.narrow { width: 14px; }
.chev.wide { width: 40px; }
.sep { flex: none; width: 1px; height: 32px; margin: 0 4px; background: #d0d0d0; }
.sep.tall { height: 86px; margin: 14px 10px 0 4px; }
.combo { position: relative; display: flex; height: 35px; background: #fff; border: 1px solid #777; }
.combo::after {
  content: ""; position: absolute; right: 7px; top: 15px;
  border: 4px solid transparent; border-top: 5px solid #666; border-bottom: 0;
}
.combo select, .combo input { width: 100%; padding: 0 2px; border: 0; background: none; appearance: none; outline: none; }
.font-name { width: 240px; margin-right: 1px; }
.font-size { width: 59px; margin-right: 2px; }
.num { width: 197px; }
.grow, .shrink { color: #555; font-weight: 600; font-size: 24px; }
.shrink { font-size: 20px; }
.ib > .grow + svg, .ib > .shrink + svg { align-self: flex-start; margin-top: 4px; }
.letter { font-size: 22px; color: #444; font-weight: 600; }
.italic { font-family: "Liberation Serif", serif; font-style: italic; font-size: 24px; }
.underline { text-decoration: underline; text-underline-offset: 4px; }
.fc { flex-direction: column; font-size: 24px; line-height: 20px; color: #666; font-weight: 600; }
.fc i { width: 24px; height: 6px; background: #f00; }
.wen { flex-direction: column; font-size: 14px; line-height: 12px; color: #444; }
.wen .blue { color: #4a80b8; font-size: 16px; line-height: 16px; }
.text-btn { display: flex; align-items: center; gap: 5px; }
.wrap-icon { display: flex; flex-direction: column; width: 24px; padding-left: 4px; font-size: 16px; line-height: 12px; color: #555; text-align: left; }
.pct { font-size: 24px; color: #555; }
.dec { flex-direction: column; align-items: flex-end; font-size: 14px; line-height: 16px; color: #444; padding-right: 4px; }
.big { display: flex; flex-direction: column; align-items: center; padding-top: 10px; line-height: 23px; }
.big > svg { margin-bottom: 3px; }
.second { display: flex; align-items: center; gap: 6px; height: 23px; }
.sort-icon { display: flex; gap: 4px; height: 46px; margin-bottom: 3px; font-size: 24px; color: #4a80b8; }
.sort-icon svg { margin-top: 11px; }
.az { display: flex; flex-direction: column; line-height: 20px; }
.az .z { color: #9563bd; }
.paste { width: 50px; }
.b62 { width: 62px; }
.b80 { width: 80px; }
.b92 { width: 92px; }
.b92.gap { margin-left: 4px; }
.b97 { width: 97px; }
.clip-col { display: flex; flex-direction: column; padding: 5px 0 0 8px; }
.clip-col button { display: flex; align-items: center; gap: 11px; height: 34px; }
.edit-col { display: flex; flex-direction: column; width: 132px; padding-top: 3px; }
.edit-col button { display: flex; align-items: center; gap: 6px; height: 34px; }
.far { margin-left: 10px; }
.collapse { position: absolute; right: 12px; bottom: 4px; display: flex; }

.qat { display: flex; align-items: center; flex: none; height: 48px; padding-left: 14px; }
.qat button { display: flex; margin-right: 21px; }
.qat .dim { color: #aaa; margin: 0 13px 0 -12px; }
.qat .custom { margin-left: 10px; }

.formula-bar { display: flex; flex: none; height: 37px; margin: 16px 6px 15px 7px; }
.formula-bar .combo { width: 152px; height: 37px; border-color: #c3c3c3; }
.formula-bar .combo input { padding: 0 7px; }
.formula-bar .combo::after { right: 10px; }
.dots { width: 3px; height: 17px; background: repeating-linear-gradient(#aaa 0 3px, transparent 3px 7px); }
.formula-bar .dots { margin: 10px 22px 0 20px; }
.fx { display: flex; width: 164px; background: #fff; border: 1px solid #c3c3c3; }
.fx button { display: flex; flex: 1; align-items: center; justify-content: center; }
.fx .fn { font: 24px "Liberation Serif", serif; color: #555; }
.formula { display: flex; flex: 1; align-items: center; margin-left: 4px; padding: 0 7px 0 14px; background: #fff; border: 1px solid #c3c3c3; font-size: 20px; }
.formula input { flex: 1; border: 0; outline: none; background: none; }

.sheet { position: relative; display: flex; flex: 1; min-height: 0; }
.viewport { flex: 1; min-width: 0; overflow: hidden; border-right: 1px solid #999; background: #cce8cf; }
table {
  table-layout: fixed;
  border-collapse: separate;
  border-spacing: 0;
  color: #000;
  font: 300 22px/22px "Liberation Serif", "Noto Sans CJK SC", serif;
}
th { padding: 0; font-weight: 400; background: #e6e6e6; color: #222; }
thead th { height: 28px; border-right: 1px solid #b5b5b5; border-bottom: 1px solid #999; }
thead th.cur { background: #d2d2d2; color: #217346; border-bottom: 2px solid #217346; }
.corner svg { display: block; margin: 3px 3px 0 auto; }
tbody th { vertical-align: bottom; border-right: 1px solid #999; border-bottom: 1px solid #b8b8b8; }
tbody th.cur { background: #d2d2d2; color: #217346; border-right: 2px solid #217346; }
td {
  padding: 0;
  overflow: hidden;
  white-space: nowrap;
  text-align: center;
  background: #cce8cf;
  border-right: 1px solid #d3d0d5;
  border-bottom: 1px solid #d3d0d5;
}
.yellow { background: #ff0; border-color: #ff0; }
.white { background: #fff; }
.title { background: #800080; color: #fff; border-right-color: #800080; }
.kr { border-right-color: #000; }
.kb { border-bottom-color: #000; }
.al { text-align: left; padding-left: 4px; }
.ar { text-align: right; padding-right: 3px; }
.s24 { font-size: 24px; }
.s28 { font-size: 28px; line-height: 30px; }
.s32 { font-size: 32px; line-height: 32px; }
.s36 { font-size: 36px; line-height: 36px; }
.bold { font-weight: 500; font-family: "Noto Sans CJK SC", sans-serif; }
.cjk { display: inline-block; width: 1em; line-height: 20px; font-family: "Noto Sans CJK SC", sans-serif; }
.mark { text-align: left; }
.phi { font-family: "Open Sans", sans-serif; font-weight: 500; line-height: 20px; }
.sans { font-family: "Liberation Sans", sans-serif; font-size: 20px; }
.root { position: relative; display: inline-block; font: 20px/22px "Liberation Sans", sans-serif; }
.root svg { position: absolute; left: calc(50% - 29px); top: -3px; }
.selected { position: relative; overflow: visible; }
.selected::before { content: ""; position: absolute; inset: -3px -2px -2px; border: 2px solid #217346; outline: 1px solid #fff; outline-offset: -3px; }
.selected::after { content: ""; position: absolute; right: -3px; bottom: -4px; width: 7px; height: 7px; background: #217346; border: solid #fff; border-width: 1px 0 0 1px; }
.vscroll { display: flex; flex-direction: column; width: 24px; margin: 1px 4px 0 3px; }
.vscroll button { display: flex; align-items: center; justify-content: center; height: 25px; background: #fff; border: 1px solid #777; }
.vscroll .track { flex: 1; background: #dadada; }
.vscroll .thumb { height: 64%; background: #fff; border: 1px solid #777; border-top-width: 2px; }
.meter {
  position: absolute; left: 0; top: 459px; width: 17px; height: 88px; padding: 11px 5px 0 4px;
  display: flex; flex-direction: column; gap: 2px;
  border-radius: 0 6px 6px 0; background: rgb(60 66 82 / 88%); border: 1px solid #777c88; border-left: 0;
}
.meter i { height: 36px; background: repeating-linear-gradient(#2a2f3c 0 2px, transparent 2px 3px); }
.meter .lit { height: 30px; background: repeating-linear-gradient(transparent 0 2px, #4a4f5c 2px 3px), linear-gradient(#a9cf4f, #3fb8a6); }

.sheet-tabs { display: flex; align-items: center; flex: none; height: 33px; border-top: 1px solid #999; border-bottom: 1px solid #c8c8c8; font-size: 20px; color: #444; }
.nav { display: flex; margin-left: 28px; }
.more { margin: -8px 0 0 22px; color: #14673c; font-weight: 700; }
.tab-list { display: flex; flex: 0 1 1096px; min-width: 0; overflow: hidden; align-self: stretch; margin-left: 7px; }
.tab-list button { position: relative; flex: none; height: 29px; padding: 0 12px 5px; line-height: 24px; }
.tab-list button::before { content: ""; position: absolute; left: 0; top: 4px; bottom: 0; width: 1px; background: #999; }
.tab-list button.active { background: #fff; color: #217346; border-bottom: 2px solid #217346; font-weight: 500; padding-bottom: 3px; }
.tab-list + .more { margin-left: 8px; }
.add { display: flex; margin-left: 13px; }
.sheet-tabs .dots { margin: 0 17px 0 19px; }
.hscroll { display: flex; flex: 1; height: 25px; margin-right: 29px; }
.hscroll button { display: flex; align-items: center; justify-content: center; width: 25px; background: #fff; border: 1px solid #777; }
.hscroll .track { flex: 1; background: #dadada; }
.hscroll .thumb { width: 54%; height: 25px; background: #fff; border: 1px solid #777; border-left: 0; }

.status { position: relative; display: flex; align-items: center; flex: none; height: 34px; padding-bottom: 1px; background: #f3f3f3; }
.ready { margin: 0 29px 0 10px; }
.status > svg { margin-right: 3px; }
.views { display: flex; align-self: stretch; margin-left: auto; }
.views button { display: flex; align-items: center; justify-content: center; width: 60px; }
.views .on { background: #c6c6c6; }
.zoom-step { display: flex; margin-left: 8px; }
.zoom { width: 148px; height: 20px; margin: 0 0 0 8px; appearance: none; background: linear-gradient(#333, #333) center / 100% 2px no-repeat; }
.zoom::-webkit-slider-thumb { appearance: none; width: 8px; height: 18px; background: #555; }
.percent { margin: 0 12px 0 20px; }
.watermark { position: absolute; right: 14px; color: #8d8d8d; font-size: 20px; text-shadow: 1px 1px 0 #fff; opacity: 0.85; }
</style>
